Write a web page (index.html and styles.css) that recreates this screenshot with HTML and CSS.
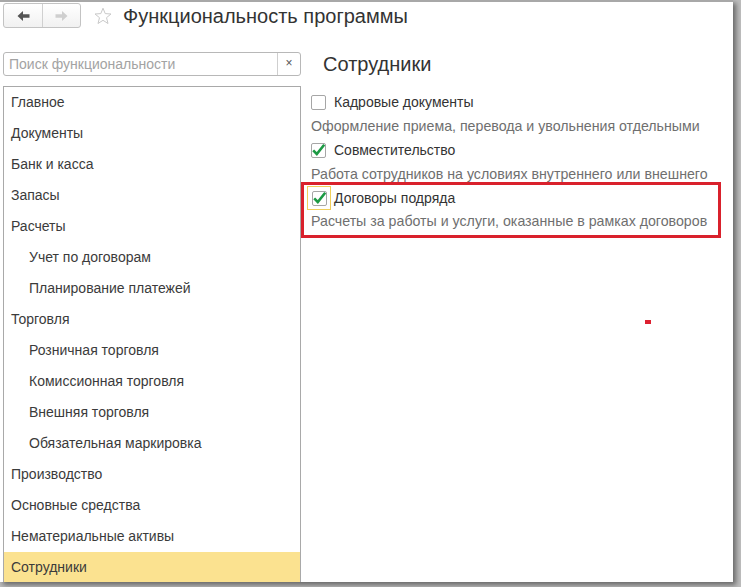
FILE: index.html
```html
<!DOCTYPE html>
<html lang="ru">

<head>
  <meta charset="UTF-8" />
  <title>Функциональность программы</title>
  <link rel="stylesheet" href="styles.css">
</head>

<body>
  <div class="window">
    <div class="header">
      <div class="nav">
        <button class="nav-btn" title="Назад">
          <svg width="13" height="12" viewBox="0 0 13 12"><path d="M0.5 6 L6 1 V4.3 H12.5 V7.7 H6 V11 Z" fill="#555"/></svg>
        </button>
        <button class="nav-btn" title="Вперед">
          <svg width="13" height="12" viewBox="0 0 13 12"><path d="M12.5 6 L7 1 V4.3 H0.5 V7.7 H7 V11 Z" fill="#cfcfcf"/></svg>
        </button>
      </div>
      <svg class="star" width="18" height="18" viewBox="0 0 18 18">
        <path d="M9 1.2 L11.2 6.6 L17 7 L12.5 10.7 L14 16.5 L9 13.3 L4 16.5 L5.5 10.7 L1 7 L6.8 6.6 Z" fill="none" stroke="#c9c9c9" stroke-width="1" stroke-linejoin="round"/>
      </svg>
      <h1>Функциональность программы</h1>
    </div>

    <div class="main">
      <div class="sidebar">
        <div class="search">
          <span class="search-text">Поиск функциональности</span>
          <span class="search-clear">×</span>
        </div>
        <ul class="sections">
          <li>Главное</li>
          <li>Документы</li>
          <li>Банк и касса</li>
          <li>Запасы</li>
          <li>Расчеты</li>
          <li class="sub">Учет по договорам</li>
          <li class="sub">Планирование платежей</li>
          <li>Торговля</li>
          <li class="sub">Розничная торговля</li>
          <li class="sub">Комиссионная торговля</li>
          <li class="sub">Внешняя торговля</li>
          <li class="sub">Обязательная маркировка</li>
          <li>Производство</li>
          <li>Основные средства</li>
          <li>Нематериальные активы</li>
          <li class="selected">Сотрудники</li>
        </ul>
      </div>

      <div class="content">
        <h2>Сотрудники</h2>

        <div class="option">
          <span class="check"></span>
          <span class="label">Кадровые документы</span>
        </div>
        <div class="hint">Оформление приема, перевода и увольнения отдельными</div>

        <div class="option">
          <span class="check">
            <svg class="tick" width="15" height="15" viewBox="0 0 15 15"><path d="M2.2 7.4 L5.8 11 L13.2 1.8" fill="none" stroke="#1d9a44" stroke-width="2.6"/></svg>
          </span>
          <span class="label">Совместительство</span>
        </div>
        <div class="hint">Работа сотрудников на условиях внутреннего или внешнего</div>

        <div class="marked">
          <div class="option">
            <span class="focus">
              <span class="check">
                <svg class="tick" width="15" height="15" viewBox="0 0 15 15"><path d="M2.2 7.4 L5.8 11 L13.2 1.8" fill="none" stroke="#1d9a44" stroke-width="2.6"/></svg>
              </span>
            </span>
            <span class="label">Договоры подряда</span>
          </div>
          <div class="hint">Расчеты за работы и услуги, оказанные в рамках договоров</div>
        </div>

        <span class="dot"></span>
      </div>
    </div>
  </div>
</body>

</html>
```

FILE: styles.css
```css
* {
  box-sizing: border-box;
}

html,
body {
  margin: 0;
  padding: 0;
  background: #bdbdbd;
}

body {
  width: 741px;
  height: 587px;
  overflow: hidden;
  font-family: Arial, 'Liberation Sans', sans-serif;
  color: #333;
}

.window {
  width: 733px;
  height: 582px;
  background: #fff;
  border-top: 2px solid #a8a8a8;
  box-shadow: 3px 3px 5px rgba(0, 0, 0, 0.45);
  overflow: hidden;
}

/* top bar */

.header {
  height: 42px;
  padding: 1px 3px 0;
  display: flex;
  align-items: flex-start;
}

.nav {
  display: flex;
  height: 25px;
  border: 1px solid #c3c3c3;
  border-radius: 3px;
  background: linear-gradient(#ffffff, #f1f1f1);
}

.nav-btn {
  width: 38px;
  height: 23px;
  padding: 0;
  border: none;
  background: transparent;
  display: flex;
  align-items: center;
  justify-content: center;
}

.nav-btn + .nav-btn {
  border-left: 1px solid #d0d0d0;
}

.star {
  margin: 4px 0 0 13px;
}

.header h1 {
  margin: 1px 0 0 11px;
  font-size: 20px;
  font-weight: normal;
  line-height: 24px;
  color: #333;
}

/* body */

.main {
  display: flex;
}

.sidebar {
  width: 301px;
  padding: 8px 0 0 3px;
  flex-shrink: 0;
}

.search {
  display: flex;
  height: 24px;
  border: 1px solid #b8b8b8;
  border-radius: 3px;
  font-size: 14px;
}

.search-text {
  flex: 1;
  padding-left: 5px;
  line-height: 22px;
  color: #a3a3a3;
}

.search-clear {
  width: 23px;
  border-left: 1px solid #cfcfcf;
  text-align: center;
  line-height: 21px;
  font-size: 12px;
  color: #555;
}

.sections {
  list-style: none;
  margin: 10px 0 0;
  padding: 0;
  border: 1px solid #a9a9a9;
  border-bottom: none;
}

.sections li {
  height: 31px;
  line-height: 30px;
  padding-left: 7px;
  font-size: 14px;
  color: #3b3b3b;
}

.sections li.sub {
  padding-left: 25px;
}

.sections li.selected {
  background: #fbe290;
}

.content {
  position: relative;
  flex: 1;
  padding: 8px 0 0 10px;
}

.content h2 {
  margin: 0 0 14px 12px;
  font-size: 20px;
  font-weight: normal;
  line-height: 24px;
  color: #333;
}

.option {
  display: flex;
  align-items: center;
  height: 24px;
  gap: 8px;
}

.label {
  font-size: 14px;
  color: #333;
}

.check {
  width: 15px;
  height: 15px;
  border: 1px solid #a6a6a6;
  border-radius: 2px;
  background: #fff;
  display: flex;
  align-items: center;
  justify-content: center;
}

.tick {
  flex-shrink: 0;
  overflow: visible;
}

.focus {
  width: 24px;
  height: 24px;
  margin: 0 -5px 0 -4px;
  border: 1px solid #f0cf5a;
  display: flex;
  align-items: center;
  justify-content: center;
}

.hint {
  height: 24px;
  line-height: 24px;
  font-size: 14.2px;
  color: #6f6f6f;
  white-space: nowrap;
}

.marked {
  width: 420px;
  margin: -4px 0 0 -10px;
  padding: 1px 0 3px 7px;
  border: 3px solid #d9212c;
}

.marked .hint {
  height: 22px;
  line-height: 22px;
}

/* stray marker on the canvas */
.dot {
  position: absolute;
  left: 344px;
  top: 276px;
  width: 6px;
  height: 4px;
  background: #dd2030;
}
```
